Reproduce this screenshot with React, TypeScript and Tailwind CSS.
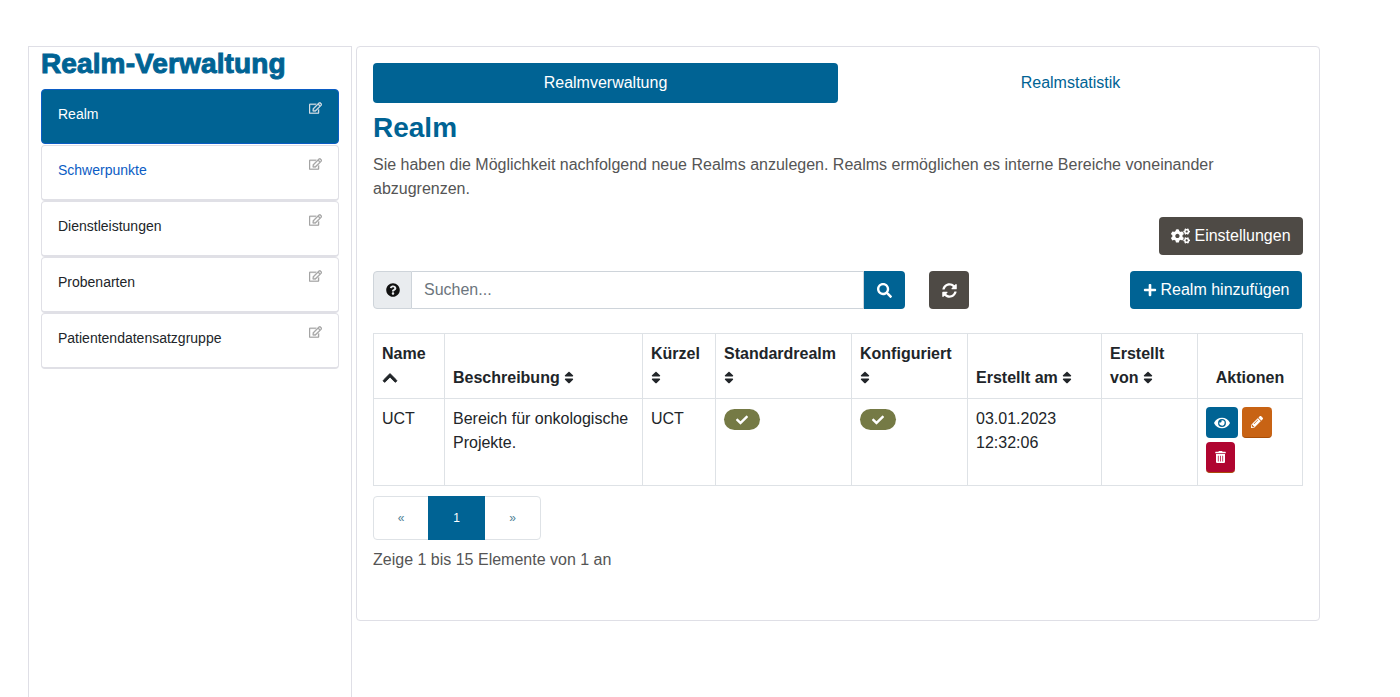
import { FaCheck, FaChevronUp, FaCogs, FaEye, FaPencilAlt, FaPlus, FaQuestionCircle, FaRegEdit, FaSearch, FaSort, FaSyncAlt, FaTrashAlt } from "react-icons/fa";

const menu = [
  { label: "Realm", active: true, text: "text-white" },
  { label: "Schwerpunkte", active: false, text: "text-[#0b5cc4]" },
  { label: "Dienstleistungen", active: false, text: "text-[#212529]" },
  { label: "Probenarten", active: false, text: "text-[#212529]" },
  { label: "Patientendatensatzgruppe", active: false, text: "text-[#212529]" },
];

function SortIcon() {
  return <FaSort className="inline-block w-[10px] h-[15px] align-[-2px]" />;
}

function Th({ className, children }: { className: string; children: React.ReactNode }) {
  return (
    <th className={`border border-[#dee2e6] px-2 pt-[7px] pb-[8px] align-bottom text-left font-bold leading-6 ${className}`}>
      {children}
    </th>
  );
}

function Yes() {
  return (
    <span className="flex items-center justify-center w-9 h-[21px] rounded-full bg-[#757a45] text-white">
      <FaCheck className="w-3 h-3" />
    </span>
  );
}

export default function App() {
  return (
    <div className="h-[697px] overflow-hidden bg-white pt-[46px] pl-[28px] flex items-start gap-1 font-['Liberation_Sans',Arial,sans-serif] text-[#212529]">
      <aside className="w-[324px] h-[651px] border-x border-t border-[#dfdfe6] pl-3 pr-3">
        <h1 className="text-[28px] leading-[34px] font-bold tracking-[0.12px] text-[#006394] [-webkit-text-stroke:1px_#006394] mb-[8px]">
          Realm-Verwaltung
        </h1>
        <div className="flex flex-col">
          {menu.map((item) => (
            <div
              key={item.label}
              className={`relative rounded-[4px] border pl-4 pt-[16px] text-sm leading-[16px] ${
                item.active
                  ? "h-[55px] mb-px bg-[#006394] border-[#0b5cc4]"
                  : "h-[56px] bg-white border-[#e0e0e6] border-b-2"
              } ${item.text}`}
            >
              {item.label}
              <FaRegEdit className={`absolute right-[16px] top-[12px] w-[13px] h-[12px] stroke-[12] ${item.active ? "text-[#d5dfe6]" : "text-[#a5a5a5]"}`} />
            </div>
          ))}
        </div>
      </aside>

      <main className="w-[964px] h-[575px] rounded-[4px] border border-[#dfdfe6] pt-4 pl-4 pr-4">
        <div className="flex w-[930px] h-10">
          <div className="w-[465px] rounded-[4px] bg-[#006394] text-white flex items-center justify-center">Realmverwaltung</div>
          <div className="w-[465px] text-[#006394] flex items-center justify-center">Realmstatistik</div>
        </div>

        <h2 className="mt-[8px] text-[28px] leading-[34px] font-bold text-[#006394]">Realm</h2>
        <p className="mt-[8px] w-[930px] leading-6 text-[#555555]">
          Sie haben die Möglichkeit nachfolgend neue Realms anzulegen. Realms ermöglichen es interne Bereiche voneinander abzugrenzen.
        </p>

        <div className="mt-4 w-[930px] flex justify-end">
          <button className="h-[38px] w-[144px] rounded-[4px] bg-[#4e4a45] text-white flex items-center justify-center gap-1">
            <FaCogs className="w-[19px] h-4" />
            Einstellungen
          </button>
        </div>

        <div className="mt-4 w-[930px] flex items-center">
          <div className="flex w-[532px] h-[38px]">
            <span className="w-[39px] rounded-l-[4px] border border-[#ced4da] bg-[#e9ecef] flex items-center justify-center">
              <FaQuestionCircle className="w-[14px] h-[14px] text-[#111111]" />
            </span>
            <span className="flex-1 border-y border-r border-[#ced4da] pl-3 flex items-center text-[#6c757d]">Suchen...</span>
            <span className="w-[41px] rounded-r-[4px] bg-[#006394] text-white flex items-center justify-center">
              <FaSearch className="w-[15px] h-[15px]" />
            </span>
          </div>
          <button className="ml-6 w-10 h-[38px] rounded-[4px] bg-[#4e4a45] text-white flex items-center justify-center">
            <FaSyncAlt className="w-[15px] h-[15px]" />
          </button>
          <button className="ml-auto mr-px h-[38px] w-[172px] rounded-[4px] bg-[#006394] text-white flex items-center justify-center gap-1">
            <FaPlus className="w-[14px] h-[14px]" />
            Realm hinzufügen
          </button>
        </div>

        <table className="mt-6 w-[929px] table-fixed border-collapse text-[#212529]">
          <thead>
            <tr className="h-[65px]">
              <Th className="w-[71px]">
                Name
                <br />
                <FaChevronUp className="inline-block w-4 h-4 align-[-3px] stroke-[30]" />
              </Th>
              <Th className="w-[198px]">Beschreibung <SortIcon /></Th>
              <Th className="w-[73px]">Kürzel <br /><SortIcon /></Th>
              <Th className="w-[136px]">Standardrealm <br /><SortIcon /></Th>
              <Th className="w-[116px]">Konfiguriert <br /><SortIcon /></Th>
              <Th className="w-[134px]">Erstellt am <SortIcon /></Th>
              <Th className="w-[96px]">Erstellt von <SortIcon /></Th>
              <Th className="w-[105px] !text-center">Aktionen</Th>
            </tr>
          </thead>
          <tbody>
            <tr className="h-[87px] align-top leading-6">
              <td className="border border-[#dee2e6] px-2 pt-2">UCT</td>
              <td className="border border-[#dee2e6] px-2 pt-2">Bereich für onkologische Projekte.</td>
              <td className="border border-[#dee2e6] px-2 pt-2">UCT</td>
              <td className="border border-[#dee2e6] px-2 pt-[10px]"><Yes /></td>
              <td className="border border-[#dee2e6] px-2 pt-[10px]"><Yes /></td>
              <td className="border border-[#dee2e6] px-2 pt-2">03.01.2023 12:32:06</td>
              <td className="border border-[#dee2e6] px-2 pt-2"></td>
              <td className="border border-[#dee2e6] px-2 pt-2">
                <div className="flex flex-wrap gap-1">
                  <span className="w-8 h-[31px] rounded-[4px] bg-[#006394] text-white flex items-center justify-center">
                    <FaEye className="w-4 h-[14px]" />
                  </span>
                  <span className="w-[30px] h-[31px] rounded-[4px] bg-[#c86314] border-b border-[#a84e08] text-white flex items-center justify-center">
                    <FaPencilAlt className="w-3 h-3" />
                  </span>
                  <span className="w-[29px] h-[31px] rounded-[4px] bg-[#b00530] border-b border-[#a84e08] text-white flex items-center justify-center">
                    <FaTrashAlt className="w-[11px] h-3" />
                  </span>
                </div>
              </td>
            </tr>
          </tbody>
        </table>

        <div className="mt-[10px] flex w-[168px] h-[44px] rounded-[4px] border border-[#dee2e6] text-xs text-[#4f8296]">
          <span className="w-[54px] flex items-center justify-center">«</span>
          <span className="w-[57px] -my-px bg-[#006394] text-white flex items-center justify-center">1</span>
          <span className="w-[55px] flex items-center justify-center">»</span>
        </div>
        <p className="mt-2 leading-6 text-[#555555]">Zeige 1 bis 15 Elemente von 1 an</p>
      </main>
    </div>
  );
}
